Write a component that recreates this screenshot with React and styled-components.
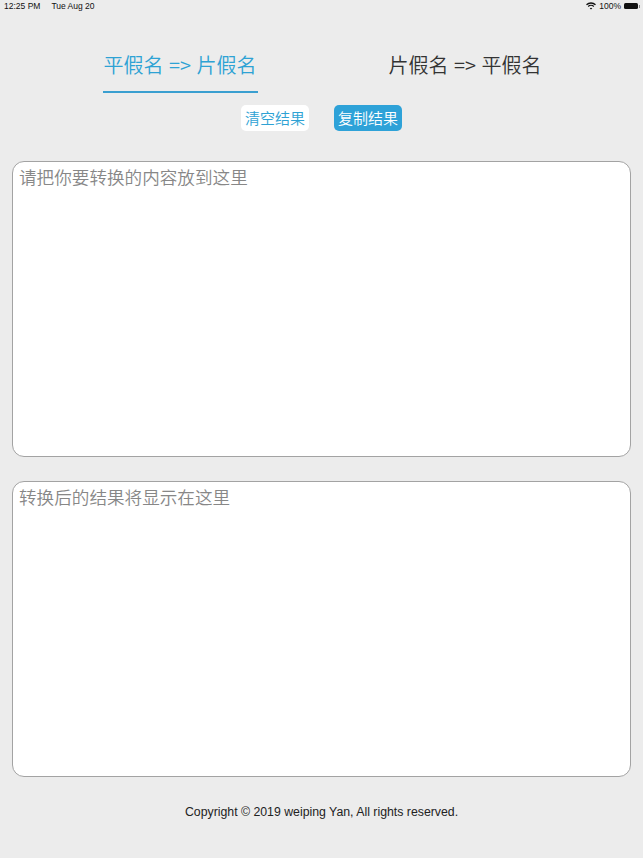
import React, { useState } from "react";
import styled, { createGlobalStyle } from "styled-components";

const Global = createGlobalStyle`
  html, body { margin: 0; padding: 0; background: #ececec; }
  body { font-family: "Noto Sans CJK SC", "Noto Sans", sans-serif; }
  * { box-sizing: border-box; }
`;

const Page = styled.div`
  width: 643px;
  min-height: 858px;
  background: #ececec;
  display: flex;
  flex-direction: column;
`;

const StatusBar = styled.div`
  height: 12px;
  display: flex;
  align-items: center;
  justify-content: space-between;
  padding: 0 3px 0 4px;
  font-family: "Liberation Sans", Arial, sans-serif;
  font-size: 8.5px;
  color: #111;
`;

const StatusGroup = styled.div`
  display: flex;
  align-items: center;
  gap: ${(p) => p.$gap}px;
`;

const Battery = styled.div`
  display: flex;
  align-items: center;
  gap: 1px;
`;

const BatteryBody = styled.div`
  width: 14px;
  height: 6px;
  background: #111;
  border-radius: 1.5px;
`;

const BatteryNub = styled.div`
  width: 1px;
  height: 3px;
  background: #888;
`;

const Tabs = styled.div`
  margin-top: 39px;
  display: flex;
  justify-content: center;
  gap: 131px;
`;

const Tab = styled.div`
  font-size: 20px;
  font-weight: 350;
  line-height: 28px;
  word-spacing: 1px;
  padding: 0 0 12px;
  width: ${(p) => p.$w}px;
  text-align: center;
  color: ${(p) => (p.$active ? "#2ea2d4" : "#333")};
  border-bottom: 2px solid ${(p) => (p.$active ? "#3a9fd0" : "transparent")};
  white-space: nowrap;
`;

const Actions = styled.div`
  margin-top: 12px;
  display: flex;
  justify-content: center;
  gap: 25px;
`;

const ActionButton = styled.button`
  width: 68px;
  height: 26px;
  border: none;
  border-radius: 5px;
  padding: 0;
  font-family: "Noto Sans CJK SC", sans-serif;
  font-weight: 350;
  font-size: 15px;
  line-height: 26px;
  background: ${(p) => (p.$primary ? "#2ea2d8" : "#ffffff")};
  color: ${(p) => (p.$primary ? "#ffffff" : "#2ea2d4")};
`;

const Fields = styled.div`
  margin-top: 30px;
  padding: 0 12px 0 12px;
  display: flex;
  flex-direction: column;
  gap: 24px;
`;

const Field = styled.textarea`
  display: block;
  width: 619px;
  height: 296px;
  resize: none;
  background: #fff;
  border: 1px solid #a3a3a3;
  border-radius: 12px;
  padding: 2px 6px;
  font-family: "Noto Sans CJK SC", sans-serif;
  font-weight: 350;
  font-size: 17.6px;
  line-height: 26px;
  color: #333;
  outline: none;
  &::placeholder { color: #878787; }
`;

const Footer = styled.div`
  margin-top: 27px;
  text-align: center;
  font-family: "Liberation Sans", Arial, sans-serif;
  font-size: 12.3px;
  line-height: 16px;
  color: #222;
`;

const Wifi = () => (
  <svg width="10" height="8" viewBox="0 0 10 8">
    <path d="M0.5 2.8 A6.5 6.5 0 0 1 9.5 2.8" stroke="#111" strokeWidth="1.3" fill="none" />
    <path d="M2.2 4.5 A4 4 0 0 1 7.8 4.5" stroke="#111" strokeWidth="1.3" fill="none" />
    <path d="M3.7 6.2 L5 7.6 L6.3 6.2 A2 2 0 0 0 3.7 6.2 Z" fill="#111" />
  </svg>
);

export default function App() {
  const [input, setInput] = useState("");
  const [output, setOutput] = useState("");
  return (
    <Page>
      <Global />
      <StatusBar>
        <StatusGroup $gap={11}>
          <span>12:25 PM</span>
          <span>Tue Aug 20</span>
        </StatusGroup>
        <StatusGroup $gap={3}>
          <Wifi />
          <span>100%</span>
          <Battery>
            <BatteryBody />
            <BatteryNub />
          </Battery>
        </StatusGroup>
      </StatusBar>
      <Tabs>
        <Tab $active $w={155}>平假名 =&gt; 片假名</Tab>
        <Tab $w={152}>片假名 =&gt; 平假名</Tab>
      </Tabs>
      <Actions>
        <ActionButton onClick={() => { setInput(""); setOutput(""); }}>清空结果</ActionButton>
        <ActionButton $primary>复制结果</ActionButton>
      </Actions>
      <Fields>
        <Field
          placeholder="请把你要转换的内容放到这里"
          value={input}
          onChange={(e) => setInput(e.target.value)}
        />
        <Field placeholder="转换后的结果将显示在这里" value={output} readOnly />
      </Fields>
      <Footer>Copyright © 2019 weiping Yan, All rights reserved.</Footer>
    </Page>
  );
}
